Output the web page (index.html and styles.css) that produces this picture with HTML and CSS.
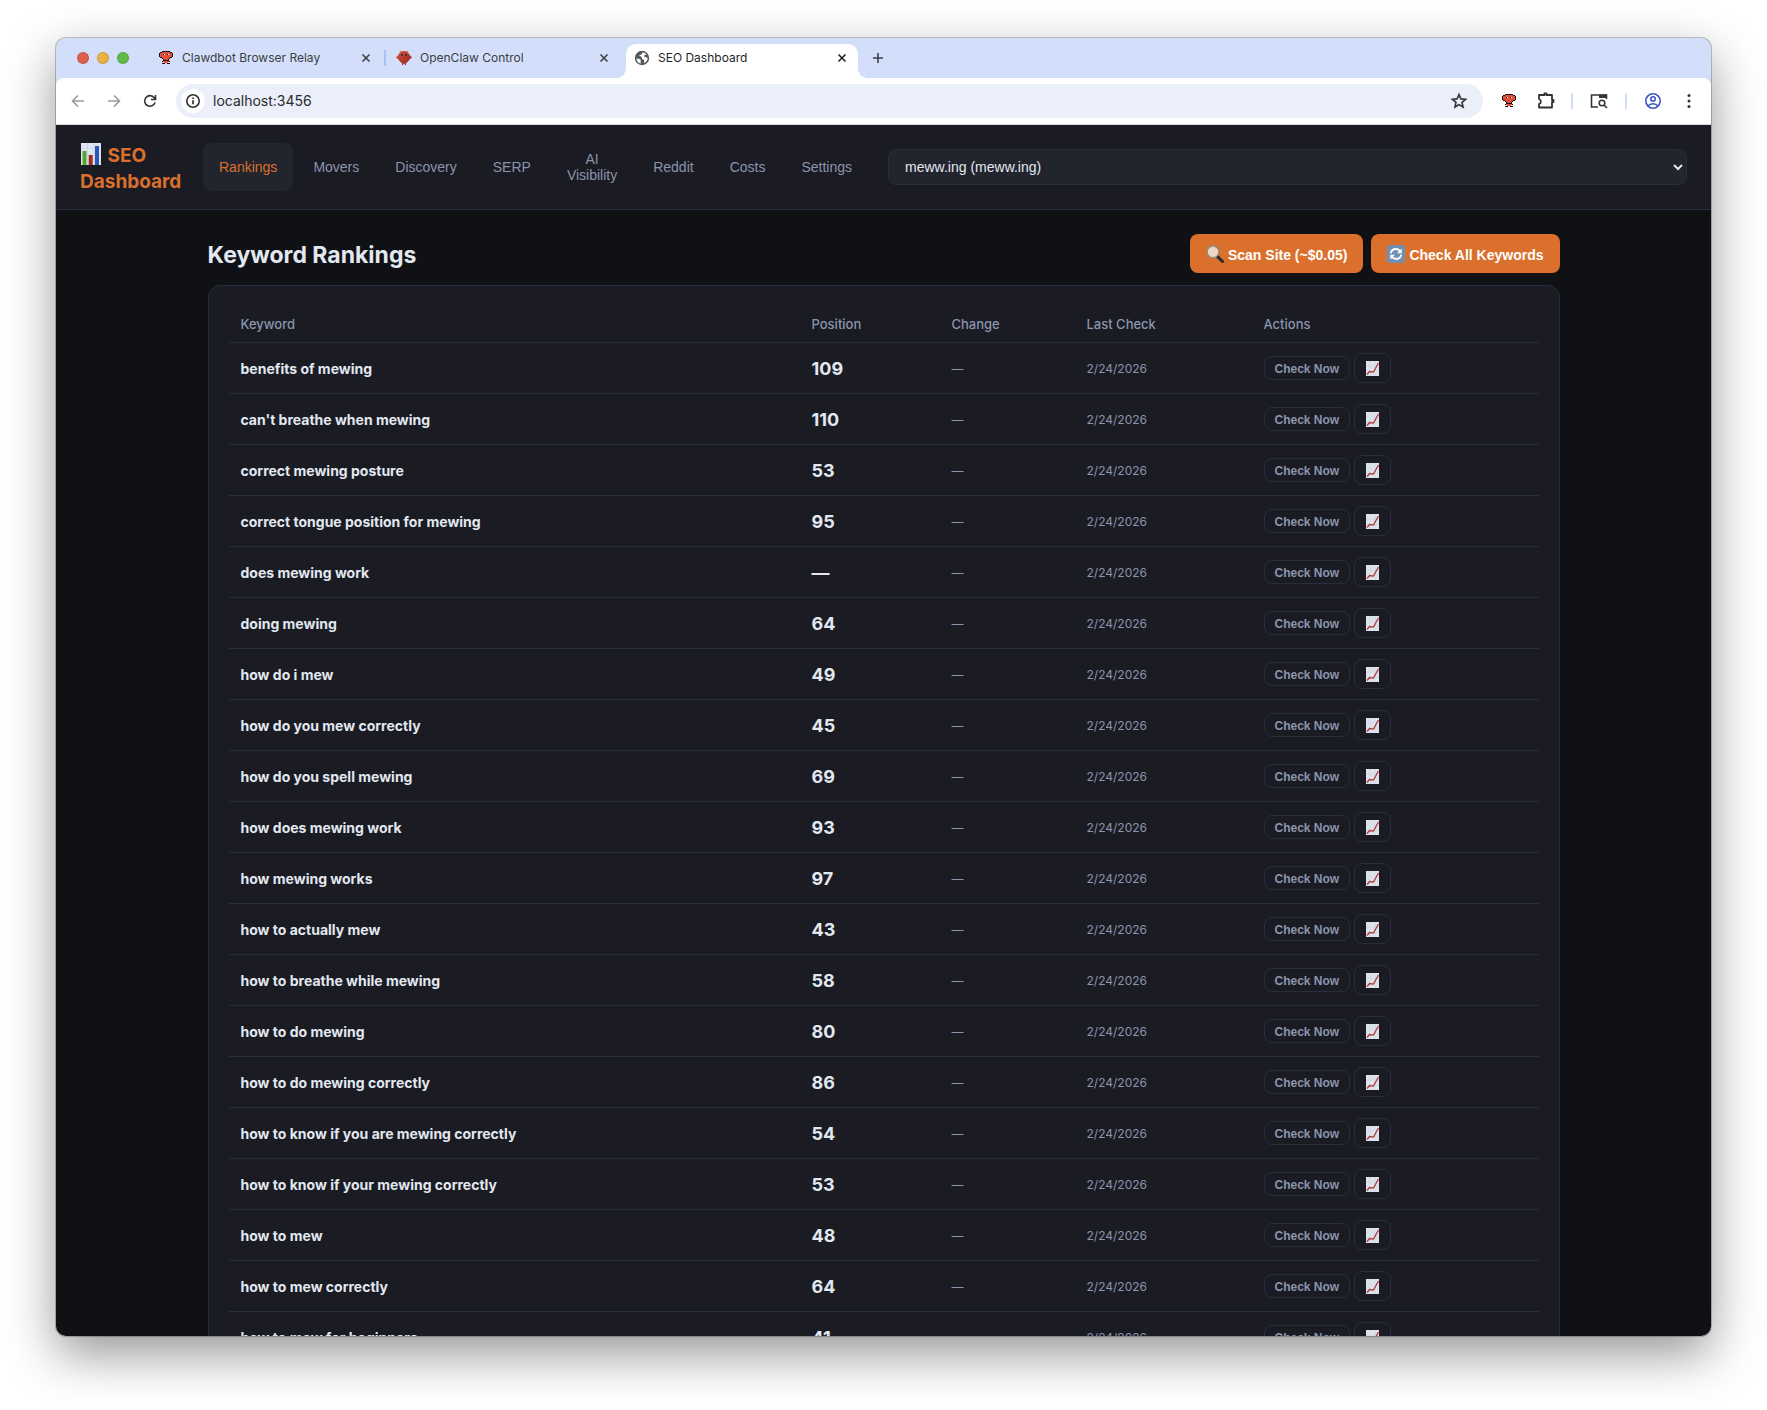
FILE: index.html
```html
<!DOCTYPE html>
<html lang="en">
<head>
	<meta charset="utf-8">
	<title>SEO Dashboard</title>
	<link rel="stylesheet" href="styles.css">
</head>
<body>

<!-- shared icons -->
<svg class="defs" aria-hidden="true">
	<symbol id="i-close" viewBox="0 0 16 16"><path d="M4 4l8 8M12 4l-8 8" stroke="currentColor" stroke-width="1.8" fill="none"/></symbol>
	<symbol id="i-relay" viewBox="0 0 14 14" shape-rendering="crispEdges">
		<path fill="#1d1010" d="M3 0h8v1H3zM1 1h12v1H1zM0 2h14v4H0zM1 6h12v1H1zM3 7h8v1H3zM4 8h6v1H4zM4 9h6v1H4zM3 10h8v1H3zM5 11h4v1H5zM3 12h3v1H3zM8 12h3v1H8z"/>
		<path fill="#e2503a" d="M3 1h8v1H3zM1 2h12v4H1zM3 6h8v1H3zM4 7h6v1H4zM5 8h4v1H5zM4 10h6v1H4zM5 11h4v1H5z"/>
		<path fill="#1d1010" d="M4 3h1v1H4zM8 3h1v1H8z"/>
		<path fill="#fff" d="M5 3h1v1H5zM9 3h1v1H9z"/>
	</symbol>
	<symbol id="i-chart" viewBox="0 0 13 15">
		<rect width="13" height="15" fill="#dde3ec"/>
		<path d="M0 5h13M0 10h13M4 0v15M9 0v15" stroke="#c9d1dc" stroke-width=".5"/>
		<path d="M1 13.500l2.500-3 4 .6L12.400 2" stroke="#b03a35" stroke-width="1.300" fill="none"/>
	</symbol>
</svg>

<div class="window">
	<div class="tabs">
		<div class="lights"><i class="red"></i><i class="yellow"></i><i class="green"></i></div>
		<div class="tab">
			<svg width="16" height="14"><use href="#i-relay"/></svg>
			<span>Clawdbot Browser Relay</span>
			<button type="button" aria-label="Close tab"><svg width="16" height="14"><use href="#i-close"/></svg></button>
		</div>
		<div class="sep"></div>
		<div class="tab">
			<svg width="16" height="16" viewBox="0 0 16 16">
				<defs><linearGradient id="claw" x1="0" y1="0" x2="1" y2="1"><stop offset="0" stop-color="#d8503f"/><stop offset="1" stop-color="#8f2620"/></linearGradient></defs>
				<path fill="url(#claw)" d="M8 1c2.600 0 4.600 1.400 5.300 3.600L16 7.500 13.300 9.800C12.500 11.400 11.300 12.600 10 13.200V15H8.800v-1.200H7.200V15H6v-1.800C4.700 12.600 3.500 11.400 2.700 9.800L0 7.500l2.700-2.900C3.400 2.400 5.400 1 8 1z"/>
				<path d="M5.500 2L4 .5M10.500 2L12 .5" stroke="#d8503f" fill="none"/>
				<circle cx="6" cy="5" r="1" fill="#1d2b2e"/><circle cx="10" cy="5" r="1" fill="#1d2b2e"/>
			</svg>
			<span>OpenClaw Control</span>
			<button type="button" aria-label="Close tab"><svg width="16" height="14"><use href="#i-close"/></svg></button>
		</div>
		<div class="sep hidden"></div>
		<div class="tab active">
			<svg width="16" height="16" viewBox="0 0 16 16">
				<circle cx="8" cy="8" r="7.200" fill="#55585d"/>
				<path fill="#fff" d="M8.500 2.500c1.700-.2 3 .6 3.900 1.700-.8 1-1.800.7-2.300 1.400-.5.800.3 1.200 1.300 1.300 1.100.1 1.500 1 2.300.8.100 2.300-1.500 4.600-3.700 5.200-.3-1.100.5-1.600.3-2.400-.3-1.100-1.900-.6-2.400-1.700-.4-.9.400-1.400-.4-1.900-.8-.4-1.600-.2-2.100-.8-.3-.6.300-1.200 1.300-1.300.9-.2 1.300-.6 1.200-1.300z"/>
				<path fill="#fff" d="M2.400 8.400c1.500.2 3.600.3 4.200 1.400.5.900-.2 1.500.2 3.700-2.400-.3-4.300-2.500-4.400-5.100z"/>
			</svg>
			<span>SEO Dashboard</span>
			<button type="button" aria-label="Close tab"><svg width="16" height="14"><use href="#i-close"/></svg></button>
		</div>
		<button type="button" class="newtab" aria-label="New tab"><svg width="16" height="16" viewBox="0 0 16 16"><path d="M8 3v10M3 8h10" stroke="currentColor" stroke-width="1.600"/></svg></button>
	</div>

	<div class="toolbar">
		<button type="button" class="off" aria-label="Back"><svg width="16" height="16" viewBox="0 0 16 16"><path d="M14 8H3M8 2.500L2.500 8 8 13.500"/></svg></button>
		<button type="button" class="off" aria-label="Forward"><svg width="16" height="16" viewBox="0 0 16 16"><path d="M2 8h11M8 2.500L13.500 8 8 13.500"/></svg></button>
		<button type="button" aria-label="Reload"><svg width="16" height="16" viewBox="0 0 16 16"><path d="M13 9.500A5.300 5.300 0 1 1 12.200 4.800L13.500 6.200M13.500 2v4.500H9"/></svg></button>
		<div class="urlbar">
			<span class="info"><svg width="16" height="16" viewBox="0 0 16 16"><circle cx="8" cy="8" r="6.200"/><path d="M8 7.300v4M8 4.500v1.500" stroke-width="1.700"/></svg></span>
			<input type="text" value="localhost:3456" aria-label="Address">
			<button type="button" aria-label="Bookmark"><svg width="18" height="18" viewBox="0 0 18 18"><path d="M9 2.600l1.900 4.300 4.700.4-3.600 3.100 1.100 4.600L9 12.600 4.900 15 6 10.400 2.400 7.300l4.700-.4z"/></svg></button>
		</div>
		<button type="button" class="ext" aria-label="Clawdbot"><svg width="16" height="14"><use href="#i-relay"/></svg></button>
		<button type="button" class="ext" aria-label="Extensions"><svg width="18" height="18" viewBox="0 0 18 18"><path d="M2 3h5.500V1.500h2V3H15v5h1.500v2H15v5.500H2V12a2.600 2.600 0 0 0 0-5z" stroke-linejoin="round"/></svg></button>
		<div class="bar"></div>
		<button type="button" class="panel" aria-label="Side panel"><svg width="18" height="18" viewBox="0 0 18 18"><path d="M8 15H1.500V3H16.500v4"/><path d="M9 2.500h8V6H9z" fill="currentColor" stroke="none"/><circle cx="12" cy="11" r="2.800"/><path d="M14 13l3 3"/></svg></button>
		<div class="bar"></div>
		<button type="button" class="me" aria-label="Profile"><svg width="18" height="18" viewBox="0 0 18 18"><circle cx="9" cy="9" r="7.200"/><circle cx="9" cy="7" r="2.200"/><path d="M4 14c1.300-1.600 3-2.300 5-2.300s3.700.7 5 2.300"/></svg></button>
		<button type="button" aria-label="Menu"><svg width="16" height="16" viewBox="0 0 16 16"><g fill="currentColor" stroke="none"><circle cx="8" cy="2.500" r="1.500"/><circle cx="8" cy="8" r="1.500"/><circle cx="8" cy="13.500" r="1.500"/></g></svg></button>
	</div>

	<div class="page">
		<header>
			<div class="brand">
				<svg width="20" height="22" viewBox="0 0 20 22"><rect width="20" height="22" fill="#dde6f0"/><path d="M0 5.500h20M0 11h20M0 16.500h20M6.500 0v22M13.500 0v22" stroke="#c2cede" stroke-width=".6"/><rect x="1.500" y="8" width="4" height="14" fill="#52a832"/><rect x="7.700" y="12" width="4" height="10" fill="#a32a1e"/><rect x="14" y="3" width="4" height="19" fill="#2f57b8"/></svg>
				SEO Dashboard
			</div>
			<nav>
				<button type="button" class="active">Rankings</button>
				<button type="button">Movers</button>
				<button type="button">Discovery</button>
				<button type="button">SERP</button>
				<button type="button">AI Visibility</button>
				<button type="button">Reddit</button>
				<button type="button">Costs</button>
				<button type="button">Settings</button>
			</nav>
			<select aria-label="Site"><option>meww.ing (meww.ing)</option></select>
		</header>

		<main>
			<div class="heading">
				<h1>Keyword Rankings</h1>
				<button type="button" class="btn">
					<svg width="18" height="18" viewBox="0 0 18 18"><path d="M11 11l5.500 5.500" stroke="#25282c" stroke-width="3" stroke-linecap="round"/><circle cx="7" cy="6.800" r="5.800" fill="#efd6c5" stroke="#8f8f8c" stroke-width="1.300"/></svg>
					<span>Scan Site (~$0.05)</span>
				</button>
				<button type="button" class="btn">
					<svg width="18" height="18" viewBox="0 0 18 18"><rect width="18" height="18" rx="3" fill="#6f8fb3"/><g stroke="#fff" stroke-width="1.800" fill="none"><path d="M3.800 8.300C4.300 5.500 6.300 4 8.800 4c1.700 0 3 .6 4 1.800M14.200 9.700C13.700 12.500 11.700 14 9.200 14c-1.700 0-3-.6-4-1.800"/></g><path d="M14.700 3.500v4.800h-4.800zM3.300 14.500V9.700h4.800z" fill="#fff"/></svg>
					<span>Check All Keywords</span>
				</button>
			</div>

			<div class="card">
				<table>
					<thead>
						<tr><th>Keyword</th><th class="pos">Position</th><th class="chg">Change</th><th class="date">Last Check</th><th class="act">Actions</th></tr>
					</thead>
					<tbody id="rows"></tbody>
				</table>
			</div>
		</main>
	</div>
</div>

<script src="rankings.js"></script>
</body>
</html>
```
FILE: rankings.js
```js
var keywords = [
	["benefits of mewing", 109],
	["can't breathe when mewing", 110],
	["correct mewing posture", 53],
	["correct tongue position for mewing", 95],
	["does mewing work", null],
	["doing mewing", 64],
	["how do i mew", 49],
	["how do you mew correctly", 45],
	["how do you spell mewing", 69],
	["how does mewing work", 93],
	["how mewing works", 97],
	["how to actually mew", 43],
	["how to breathe while mewing", 58],
	["how to do mewing", 80],
	["how to do mewing correctly", 86],
	["how to know if you are mewing correctly", 54],
	["how to know if your mewing correctly", 53],
	["how to mew", 48],
	["how to mew correctly", 64],
	["how to mew for beginners", 41]
];

document.getElementById("rows").innerHTML = keywords.map(function(k) {
	return "<tr>" +
		"<td class='kw'>" + k[0] + "</td>" +
		"<td class='pos'>" + (k[1] || "—") + "</td>" +
		"<td class='chg'>—</td>" +
		"<td class='date'>2/24/2026</td>" +
		"<td class='act'><div>" +
			"<button type='button' class='check'>Check Now</button>" +
			"<button type='button' class='history' aria-label='History'><svg width='13' height='15'><use href='#i-chart'/></svg></button>" +
		"</div></td></tr>";
}).join("");
```
FILE: styles.css
```css
* { box-sizing: border-box; }

body {
	margin: 0;
	height: 100vh;
	padding: 38px 56px 74px;
	background: #fff;
	font-family: Inter, "Liberation Sans", sans-serif;
	overflow: hidden;
}

button { border: 0; padding: 0; background: none; color: inherit; font-family: "Liberation Sans", Arial, sans-serif; }
svg { display: block; flex: none; }
.defs { position: absolute; width: 0; height: 0; }

/* browser window */
.window {
	height: 100%;
	display: flex;
	flex-direction: column;
	border-radius: 10px;
	overflow: hidden;
	background: #d3dffa;
	box-shadow: 0 0 0 1px rgba(0,0,0,.22), 0 18px 50px rgba(0,0,0,.42);
}

.tabs {
	flex: none;
	height: 40px;
	display: flex;
	align-items: flex-end;
	padding-left: 21px;
	color: #3c4043;
}
.lights { display: flex; gap: 8px; width: 73px; height: 40px; align-items: center; }
.lights i { width: 12px; height: 12px; border-radius: 50%; border: 1px solid rgba(0,0,0,.12); }
.red { background: #e0604f; }
.yellow { background: #eab244; }
.green { background: #62ba46; }

.tab {
	width: 232px;
	height: 34px;
	display: flex;
	align-items: center;
	gap: 8px;
	padding: 0 8px 6px;
	font-size: 12px;
}
.tab span { flex: 1; padding-bottom: 2px; }
.tab.active { position: relative; background: #fff; color: #1f1f1f; border-radius: 10px 10px 0 0; }
.tab.active:before, .tab.active:after {
	content: "";
	position: absolute;
	bottom: 0;
	width: 10px;
	height: 10px;
}
.tab.active:before { right: 100%; background: radial-gradient(circle at 0 0, transparent 10px, #fff 10px); }
.tab.active:after { left: 100%; background: radial-gradient(circle at 100% 0, transparent 10px, #fff 10px); }
.sep { width: 2px; height: 16px; margin: 0 2px 12px; background: #a8c0f5; }
.sep.hidden { background: none; }
.newtab { margin: 0 12px 12px; }

.toolbar {
	flex: none;
	height: 47px;
	display: flex;
	align-items: center;
	padding: 0 14px 1px;
	background: #fff;
	border-bottom: 1px solid #d9dbe0;
	border-radius: 8px 8px 0 0;
	color: #333;
}
.toolbar svg { stroke: currentColor; stroke-width: 1.6px; fill: none; }
.toolbar > button { margin-right: 20px; }
.toolbar .off { color: #9a9a9a; }
.urlbar {
	flex: 1;
	height: 34px;
	display: flex;
	align-items: center;
	margin: 0 18px 0 -2px;
	padding: 0 15px 0 5px;
	border-radius: 17px;
	background: #ebeff9;
}
.info { padding: 4px; margin-right: 8px; border-radius: 50%; background: #fff; }
.urlbar input { flex: 1; border: 0; padding: 0; background: none; font: 14px Inter, sans-serif; color: #2a2a2a; }
.toolbar .ext svg { stroke-width: 1.8px; }
.toolbar .ext use { stroke: none; }
.toolbar .ext + .bar { margin-left: -4px; }
.bar { width: 2px; height: 16px; margin-right: 17px; background: #d0defa; }
.toolbar .panel { margin-right: 17px; }
.toolbar .me { color: #3a56c5; margin-right: 19px; }
.toolbar > button:last-child { margin-right: 0; }

/* dashboard */
.page { flex: 1; min-height: 0; overflow: hidden; background: #101115; color: #e2e8f0; }

header {
	display: flex;
	align-items: center;
	gap: 20px;
	height: 85px;
	padding: 0 24px;
	background: #1a1b23;
	border-bottom: 1px solid #2a2d3d;
}
.brand { width: 103px; padding-top: 3px; font-size: 19px; line-height: 26px; font-weight: 700; color: #db702c; }
.brand svg { display: inline-block; vertical-align: -3px; margin: 0 2px 0 1px; }
nav { display: flex; gap: 4px; }
nav button {
	width: min-content;
	padding: 8px 16px;
	border-radius: 8px;
	font-size: 14px;
	line-height: 16px;
	color: #8b95ad;
}
nav .active { background: #22252e; color: #db702c; }
select {
	flex: 1;
	min-width: 0;
	height: 36px;
	padding: 8px 12px;
	border: 1px solid #2a2d3d;
	border-radius: 8px;
	background: #22252e;
	color: #e2e8f0;
	font: 14px "Liberation Sans", Arial, sans-serif;
}

main { max-width: 1400px; margin: 0 auto; padding: 24px; }
.heading { display: flex; align-items: center; gap: 8px; margin-bottom: 12px; }
h1 { flex: 1; margin: 0; padding-top: 2px; font-size: 23px; line-height: 32px; font-weight: 700; }
.btn {
	display: flex;
	align-items: center;
	gap: 4px;
	height: 39px;
	padding: 0 16px;
	border-radius: 8px;
	background: #db702c;
	color: #fff;
	font-size: 14px;
	font-weight: 700;
}
.btn span { padding-top: 2px; }

.card { padding: 20px; border: 1px solid #2a2d3d; border-radius: 12px; background: #1a1b23; }
table { width: 100%; table-layout: fixed; border-collapse: separate; border-spacing: 0; }
th, td { height: 51px; padding: 0 12px; border-bottom: 1px solid #2a2d3d; text-align: left; }
th { height: 37px; font-size: 13px; font-weight: 500; color: #8b95ad; }
th.pos { width: 140px; }
th.chg { width: 135px; }
th.date { width: 177px; }
th.act { width: 287px; }
.kw { font-size: 14px; font-weight: 700; }
td.pos { font-size: 18px; font-weight: 700; }
td.chg { font-size: 12px; font-weight: 500; color: #8b95ad; }
td.date { font-size: 12px; color: #8b95ad; }
.act div { display: flex; align-items: center; gap: 4px; }
.check, .history { border: 1px solid #2a2d3d; border-radius: 8px; color: #8b95ad; }
.check { height: 24px; padding: 1px 10px 0; font-size: 12px; font-weight: 700; }
.history { height: 30px; padding: 0 11px; }
```
